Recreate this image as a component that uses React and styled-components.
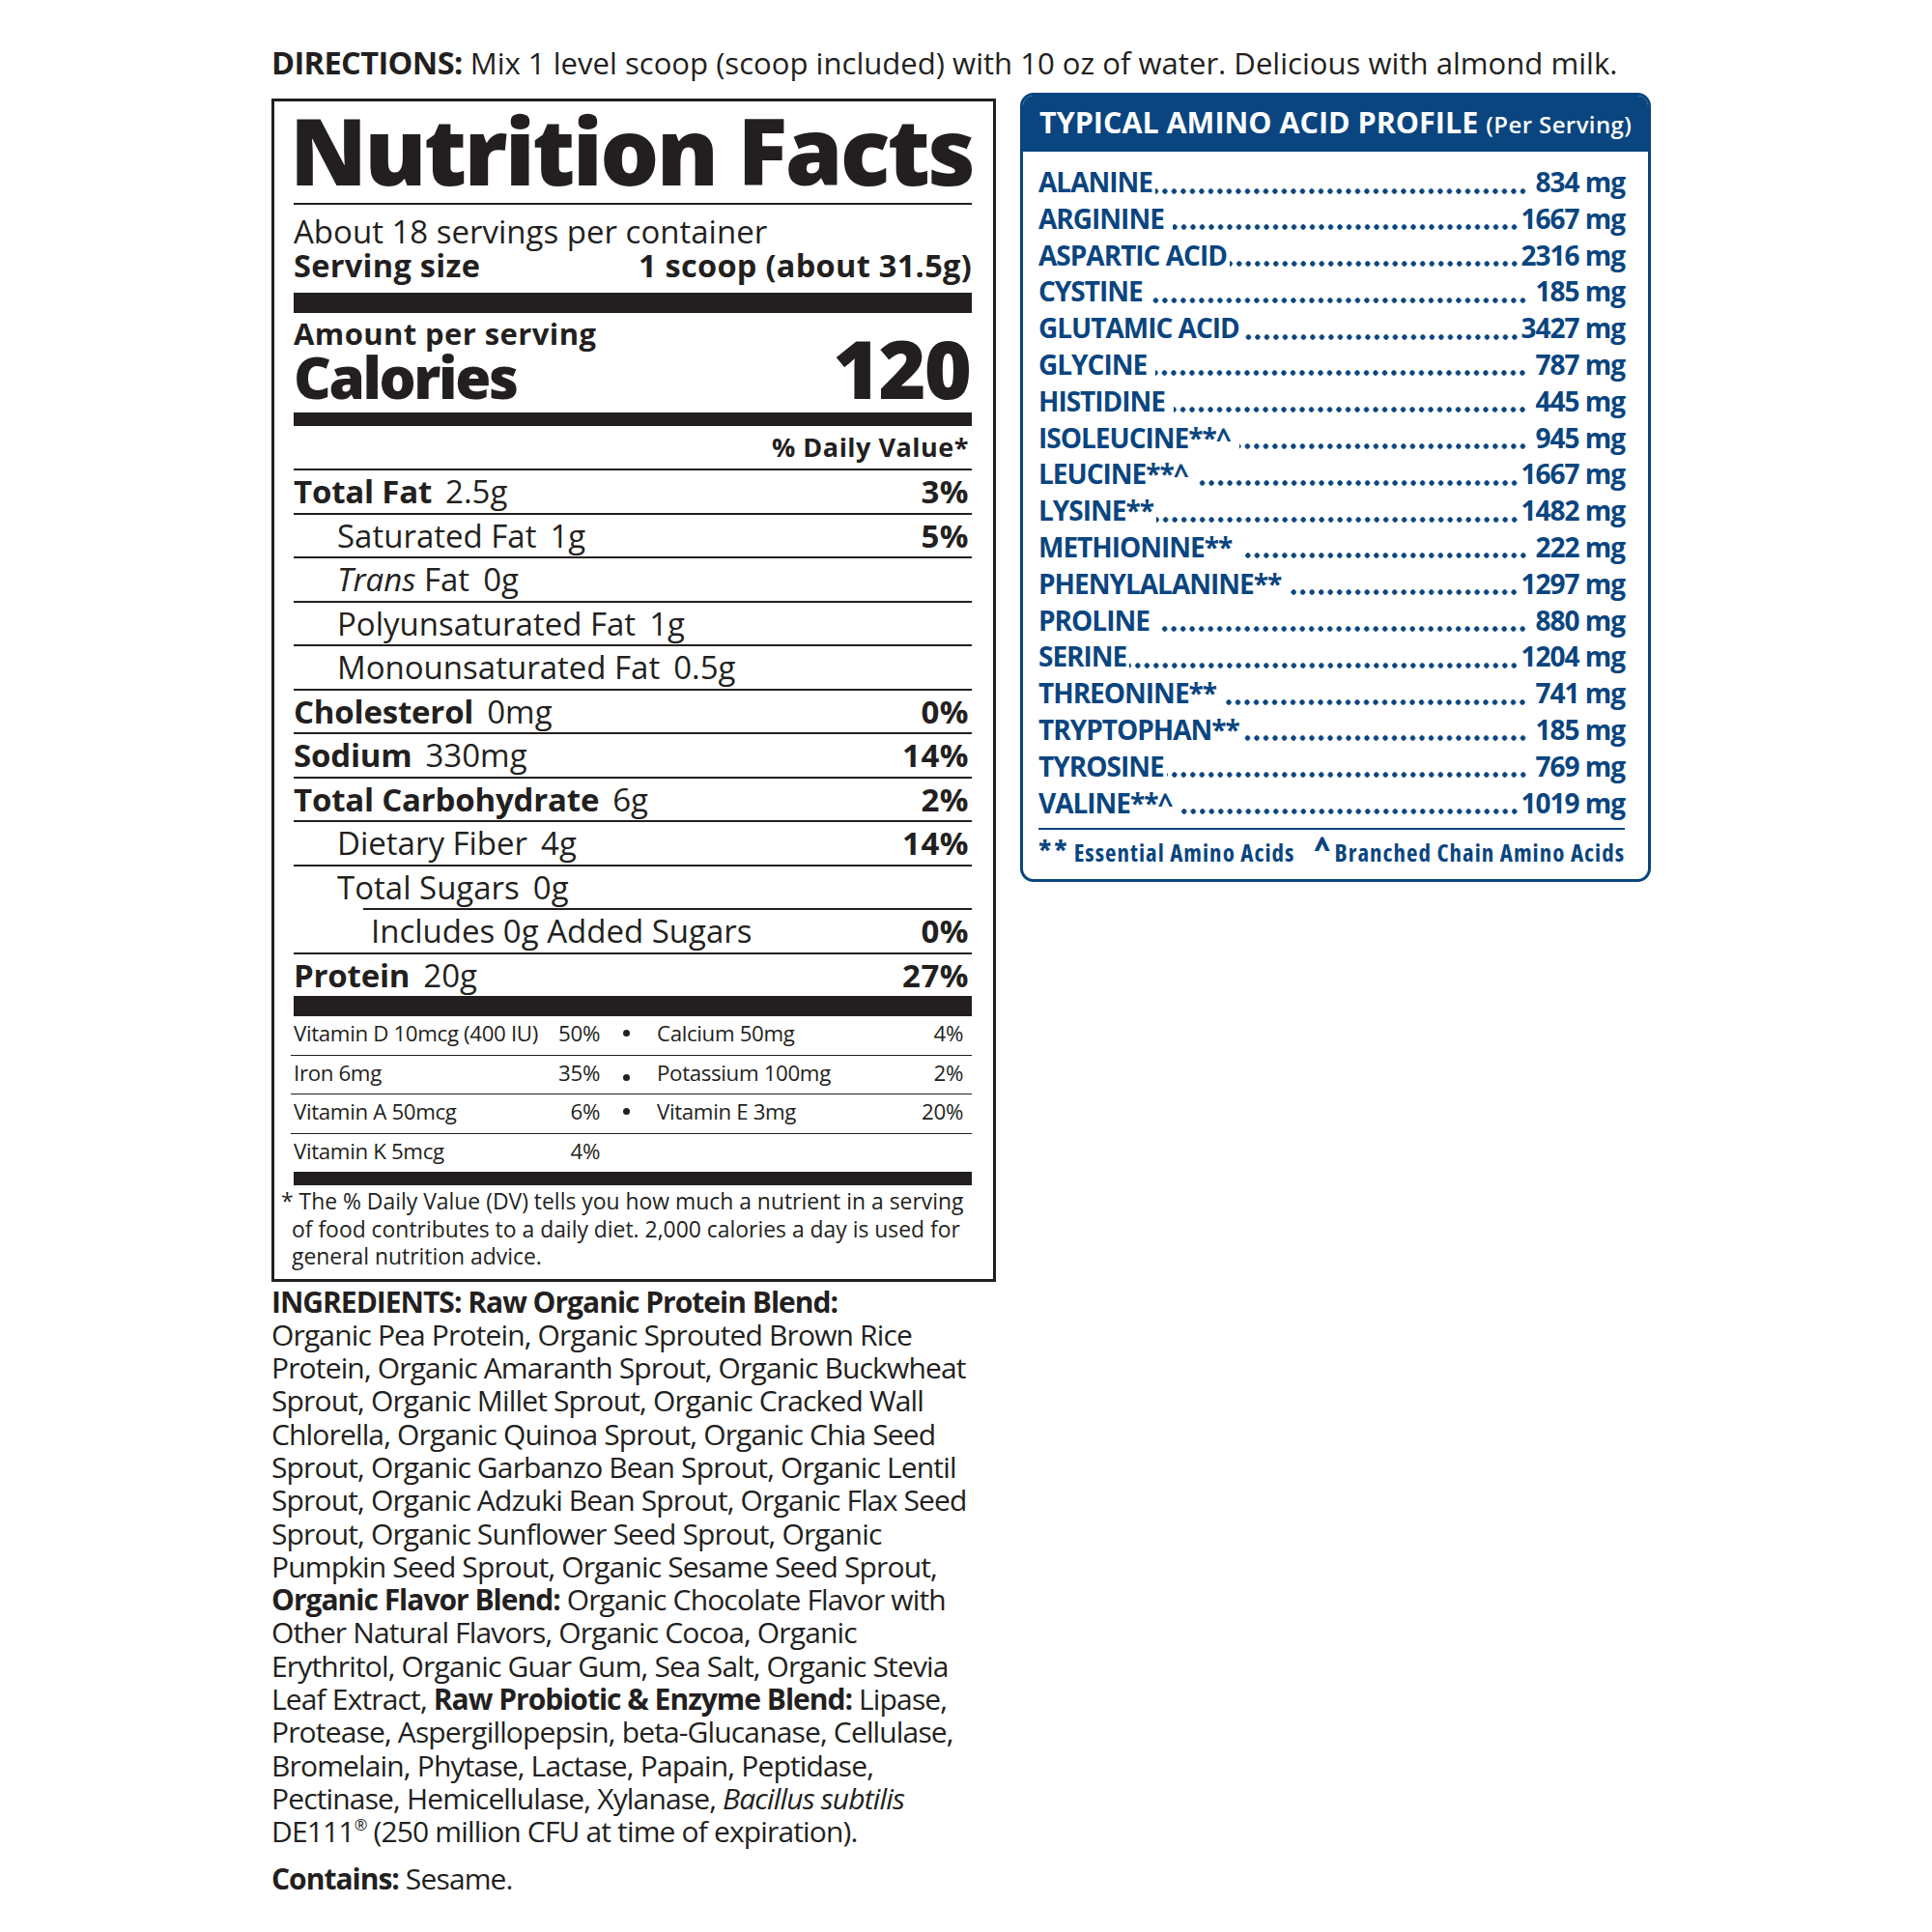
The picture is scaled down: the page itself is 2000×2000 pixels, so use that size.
import React from 'react';
import styled, { createGlobalStyle } from 'styled-components';

const INK = '#231f20';
const BLUE = '#0a457f';

const GlobalStyle = createGlobalStyle`
  body {
    margin: 0;
    background: #ffffff;
    color: ${INK};
    font-family: "Open Sans", "Liberation Sans", sans-serif;
  }
`;

const nutrients = [
  { name: 'Total Fat', amount: '2.5g', dv: '3%', bold: true },
  { name: 'Saturated Fat', amount: '1g', dv: '5%', indent: 45 },
  { name: <><i>Trans</i> Fat</>, amount: '0g', indent: 45 },
  { name: 'Polyunsaturated Fat', amount: '1g', indent: 45 },
  { name: 'Monounsaturated Fat', amount: '0.5g', indent: 45 },
  { name: 'Cholesterol', amount: '0mg', dv: '0%', bold: true },
  { name: 'Sodium', amount: '330mg', dv: '14%', bold: true },
  { name: 'Total Carbohydrate', amount: '6g', dv: '2%', bold: true },
  { name: 'Dietary Fiber', amount: '4g', dv: '14%', indent: 45 },
  { name: 'Total Sugars', amount: '0g', indent: 45 },
  { name: 'Includes 0g Added Sugars', dv: '0%', indent: 8, inset: 72 },
  { name: 'Protein', amount: '20g', dv: '27%', bold: true },
];

const vitamins = [
  ['Vitamin D 10mcg (400 IU)', '50%', 'Calcium 50mg', '4%'],
  ['Iron 6mg', '35%', 'Potassium 100mg', '2%', true],
  ['Vitamin A 50mcg', '6%', 'Vitamin E 3mg', '20%'],
  ['Vitamin K 5mcg', '4%'],
];

const aminos = [
  ['ALANINE', '834 mg'],
  ['ARGININE ', '1667 mg'],
  ['ASPARTIC ACID', '2316 mg'],
  ['CYSTINE ', '185 mg'],
  ['GLUTAMIC ACID', '3427 mg'],
  ['GLYCINE ', '787 mg'],
  ['HISTIDINE ', '445 mg'],
  ['ISOLEUCINE**^ ', '945 mg'],
  ['LEUCINE**^ ', '1667 mg'],
  ['LYSINE**', '1482 mg'],
  ['METHIONINE** ', '222 mg'],
  ['PHENYLALANINE** ', '1297 mg'],
  ['PROLINE ', '880 mg'],
  ['SERINE', '1204 mg'],
  ['THREONINE** ', '741 mg'],
  ['TRYPTOPHAN**', '185 mg'],
  ['TYROSINE', '769 mg'],
  ['VALINE**^ ', '1019 mg'],
];

const Page = styled.div`
  padding: 45px 0 0 281px;
`;

const Directions = styled.div`
  font-size: 31.1px;
  line-height: 40px;
  white-space: nowrap;
  b { font-weight: 700; font-size: 32.5px; letter-spacing: -0.6px; }
`;

const Columns = styled.div`
  display: flex;
  align-items: flex-start;
  gap: 25px;
  margin-top: 11px;
`;

const LeftColumn = styled.div`
  width: 750px;
  margin-top: 6px;
`;

const LabelBox = styled.section`
  box-sizing: border-box;
  width: 750px;
  border: 3px solid ${INK};
  padding: 0 22px 0 20px;
`;

const Title = styled.h1`
  margin: 0 -4px 5px -4px;
  font-size: 96px;
  line-height: 100px;
  font-weight: 800;
  letter-spacing: -2.7px;
  white-space: nowrap;
`;

const Hairline = styled.div`
  border-top: 2px solid ${INK};
`;

const Servings = styled.div`
  padding-top: 10px;
  font-size: 33px;
  line-height: 35px;
  white-space: nowrap;
`;

const ServingSize = styled.div`
  display: flex;
  justify-content: space-between;
  font-size: 32.5px;
  font-weight: 700;
  letter-spacing: 0.3px;
`;

const Bar = styled.div`
  height: ${(p) => p.$h}px;
  margin-top: ${(p) => p.$mt || 0}px;
  background: ${INK};
`;

const CaloriesRow = styled.div`
  display: flex;
  justify-content: space-between;
  align-items: flex-end;
  margin-top: 6px;
`;

const Amount = styled.div`
  font-size: 31px;
  line-height: 30px;
  font-weight: 700;
  letter-spacing: 0.4px;
`;

const CaloriesLabel = styled.div`
  font-size: 60px;
  line-height: 60px;
  font-weight: 800;
  letter-spacing: -2.4px;
`;

const CaloriesValue = styled.div`
  font-size: 84px;
  line-height: 78px;
  font-weight: 800;
  letter-spacing: -2px;
  padding-right: 2px;
`;

const DvHeader = styled.div`
  text-align: right;
  font-size: 27px;
  line-height: 44px;
  font-weight: 700;
  letter-spacing: 0.5px;
  padding-right: 3px;
`;

const NutrientRow = styled.div`
  display: flex;
  justify-content: space-between;
  align-items: center;
  height: 43.5px;
  border-top: 2px solid ${INK};
  margin-left: ${(p) => p.$inset || 0}px;
  padding: 0 3px 0 ${(p) => p.$indent || 0}px;
  font-size: 33px;
  white-space: nowrap;
`;

const NutrientName = styled.span`
  font-weight: ${(p) => (p.$bold ? 700 : 400)};
  letter-spacing: ${(p) => (p.$bold ? '-0.2px' : '0')};
  i { font-style: italic; }
`;

const NutrientAmount = styled.span`
  margin-left: 14px;
`;

const Dv = styled.span`
  font-weight: 700;
  letter-spacing: 0.5px;
`;

const VitaminRow = styled.div`
  display: grid;
  grid-template-columns: 317px 59px 317px;
  align-items: center;
  height: 35px;
  padding-bottom: 4.5px;
  border-top: ${(p) => (p.$first ? 'none' : `1.5px solid ${INK}`)};
  margin-left: -3px;
  padding-left: 3px;
  font-size: 22.3px;
  letter-spacing: -0.35px;
  white-space: nowrap;
`;

const VitaminCell = styled.div`
  display: flex;
  justify-content: space-between;
`;

const Bullet = styled.span`
  justify-self: center;
  width: 7px;
  height: 7px;
  border-radius: 50%;
  background: ${INK};
  margin-left: -4px;
  transform: translateY(${(p) => (p.$low ? 5 : 0)}px);
`;

const Footnote = styled.p`
  margin: 0 0 0 -2px;
  padding: 3px 0 8px;
  font-size: 22.9px;
  line-height: 28.5px;
  text-indent: -11px;
  white-space: nowrap;
`;

const Ingredients = styled.p`
  margin: 4px 0 0;
  font-size: 30px;
  line-height: 34.3px;
  letter-spacing: -0.85px;
  white-space: nowrap;
  b { font-weight: 700; letter-spacing: -1px; }
  i { font-style: italic; }
  sup { font-size: 0.55em; line-height: 0; vertical-align: 0.7em; }
`;

const Contains = styled.p`
  margin: 14px 0 0;
  font-size: 30px;
  line-height: 34.3px;
  letter-spacing: -0.85px;
  b { font-weight: 700; letter-spacing: -1px; }
`;

const AminoPanel = styled.section`
  box-sizing: border-box;
  width: 653px;
  border: 3px solid ${BLUE};
  border-radius: 14px;
  overflow: hidden;
  color: ${BLUE};
`;

const AminoHeader = styled.header`
  background: ${BLUE};
  color: #ffffff;
  height: 54px;
  line-height: 54px;
  padding: 0 0 4px 17px;
  white-space: nowrap;
`;

const AminoTitle = styled.span`
  font-size: 30.5px;
  font-weight: 700;
`;

const PerServing = styled.span`
  font-size: 24px;
  font-weight: 600;
  margin-left: 8px;
  letter-spacing: 0.4px;
`;

const AminoBody = styled.div`
  padding: 13px 24px 11px 16px;
`;

const AminoRow = styled.div`
  display: flex;
  height: 37.8px;
  line-height: 37.8px;
  font-size: 28px;
  font-weight: 700;
  letter-spacing: -1px;
  white-space: pre;
`;

/* leader dots drawn as a repeating dot pattern, right-aligned to the value */
const Leader = styled.span`
  flex: 1;
  margin: 0 2px 0 3px;
  background-image: radial-gradient(circle, ${BLUE} 2.3px, transparent 2.9px);
  background-size: 9.5px 9.5px;
  background-repeat: repeat-x;
  background-position: right 0 top 22.5px;
`;

const AminoFooter = styled.div`
  display: flex;
  justify-content: space-between;
  margin-top: 6.5px;
  padding-top: 5px;
  border-top: 2px solid ${BLUE};
  font-size: 25px;
  line-height: 34px;
  font-weight: 700;
  font-stretch: 75%;
  letter-spacing: 1px;
  white-space: nowrap;
`;

const Mark = styled.span`
  font-size: 30px;
  margin-right: 4px;
  letter-spacing: 3px;
`;

const Caret = styled.span`
  display: inline-block;
  font-size: 30px;
  font-weight: 800;
  margin-right: 4px;
  transform: translateY(-4px);
`;

export default function App() {
  return (
    <Page>
      <GlobalStyle />
      <Directions>
        <b>DIRECTIONS:</b> Mix 1 level scoop (scoop included) with 10 oz of water. Delicious with almond milk.
      </Directions>
      <Columns>
        <LeftColumn>
          <LabelBox>
            <Title>Nutrition Facts</Title>
            <Hairline />
            <Servings>
              <div>About 18 servings per container</div>
              <ServingSize>
                <span>Serving size</span>
                <span>1 scoop (about 31.5g)</span>
              </ServingSize>
            </Servings>
            <Bar $h={21} $mt={11} />
            <CaloriesRow>
              <div>
                <Amount>Amount per serving</Amount>
                <CaloriesLabel>Calories</CaloriesLabel>
              </div>
              <CaloriesValue>120</CaloriesValue>
            </CaloriesRow>
            <Bar $h={14} $mt={7} />
            <DvHeader>% Daily Value*</DvHeader>
            {nutrients.map((n, i) => (
              <NutrientRow key={i} $indent={n.indent} $inset={n.inset}>
                <span>
                  <NutrientName $bold={n.bold}>{n.name}</NutrientName>
                  {n.amount && <NutrientAmount>{n.amount}</NutrientAmount>}
                </span>
                {n.dv && <Dv>{n.dv}</Dv>}
              </NutrientRow>
            ))}
            <Bar $h={21} />
            {vitamins.map(([a, av, b, bv, low], i) => (
              <VitaminRow key={i} $first={i === 0}>
                <VitaminCell>
                  <span>{a}</span>
                  <span>{av}</span>
                </VitaminCell>
                {b ? <Bullet $low={low} /> : <span />}
                {b ? (
                  <VitaminCell>
                    <span>{b}</span>
                    <span>{bv}</span>
                  </VitaminCell>
                ) : (
                  <span />
                )}
              </VitaminRow>
            ))}
            <Bar $h={14} />
            <Footnote>
              * The % Daily Value (DV) tells you how much a nutrient in a serving
              <br />
              of food contributes to a daily diet. 2,000 calories a day is used for
              <br />
              general nutrition advice.
            </Footnote>
          </LabelBox>
          <Ingredients>
            <b>INGREDIENTS: Raw Organic Protein Blend:</b>
            <br />
            Organic Pea Protein, Organic Sprouted Brown Rice
            <br />
            Protein, Organic Amaranth Sprout, Organic Buckwheat
            <br />
            Sprout, Organic Millet Sprout, Organic Cracked Wall
            <br />
            Chlorella, Organic Quinoa Sprout, Organic Chia Seed
            <br />
            Sprout, Organic Garbanzo Bean Sprout, Organic Lentil
            <br />
            Sprout, Organic Adzuki Bean Sprout, Organic Flax Seed
            <br />
            Sprout, Organic Sunflower Seed Sprout, Organic
            <br />
            Pumpkin Seed Sprout, Organic Sesame Seed Sprout,
            <br />
            <b>Organic Flavor Blend:</b> Organic Chocolate Flavor with
            <br />
            Other Natural Flavors, Organic Cocoa, Organic
            <br />
            Erythritol, Organic Guar Gum, Sea Salt, Organic Stevia
            <br />
            Leaf Extract, <b>Raw Probiotic &amp; Enzyme Blend:</b> Lipase,
            <br />
            Protease, Aspergillopepsin, beta-Glucanase, Cellulase,
            <br />
            Bromelain, Phytase, Lactase, Papain, Peptidase,
            <br />
            Pectinase, Hemicellulase, Xylanase, <i>Bacillus subtilis</i>
            <br />
            DE111<sup>®</sup> (250 million CFU at time of expiration).
          </Ingredients>
          <Contains>
            <b>Contains:</b> Sesame.
          </Contains>
        </LeftColumn>
        <AminoPanel>
          <AminoHeader>
            <AminoTitle>TYPICAL AMINO ACID PROFILE</AminoTitle>
            <PerServing>(Per Serving)</PerServing>
          </AminoHeader>
          <AminoBody>
            {aminos.map(([name, value]) => (
              <AminoRow key={name}>
                <span>{name}</span>
                <Leader />
                <span>{value.length < 7 ? ` ${value}` : value}</span>
              </AminoRow>
            ))}
            <AminoFooter>
              <span>
                <Mark>**</Mark>Essential Amino Acids
              </span>
              <span>
                <Caret>^</Caret>Branched Chain Amino Acids
              </span>
            </AminoFooter>
          </AminoBody>
        </AminoPanel>
      </Columns>
    </Page>
  );
}
